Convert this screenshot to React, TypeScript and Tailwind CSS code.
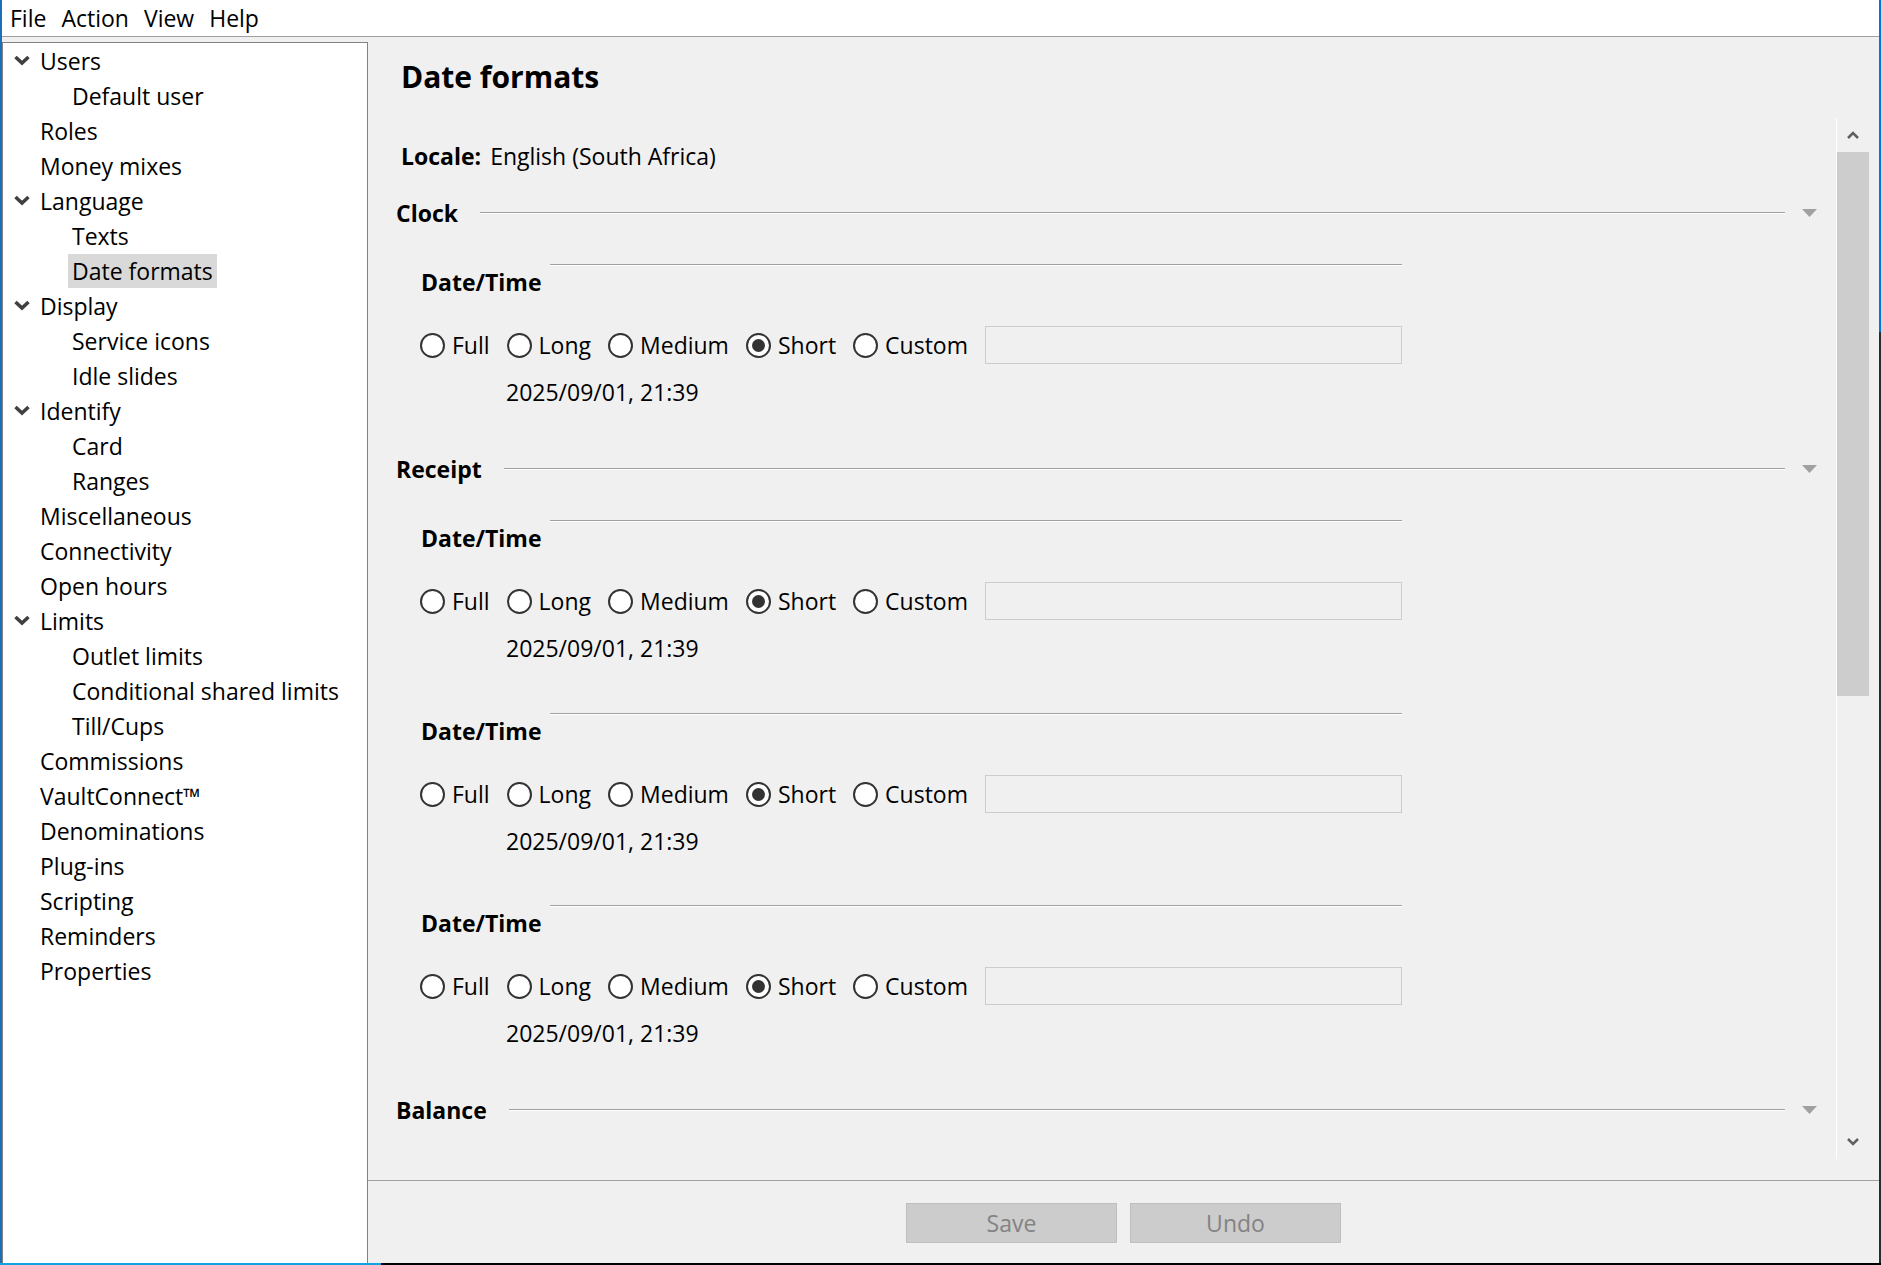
import React from 'react';

type Node = { label: string; child?: boolean; open?: boolean; selected?: boolean };

const tree: Node[] = [
  { label: 'Users', open: true },
  { label: 'Default user', child: true },
  { label: 'Roles' },
  { label: 'Money mixes' },
  { label: 'Language', open: true },
  { label: 'Texts', child: true },
  { label: 'Date formats', child: true, selected: true },
  { label: 'Display', open: true },
  { label: 'Service icons', child: true },
  { label: 'Idle slides', child: true },
  { label: 'Identify', open: true },
  { label: 'Card', child: true },
  { label: 'Ranges', child: true },
  { label: 'Miscellaneous' },
  { label: 'Connectivity' },
  { label: 'Open hours' },
  { label: 'Limits', open: true },
  { label: 'Outlet limits', child: true },
  { label: 'Conditional shared limits', child: true },
  { label: 'Till/Cups', child: true },
  { label: 'Commissions' },
  { label: 'VaultConnect™' },
  { label: 'Denominations' },
  { label: 'Plug-ins' },
  { label: 'Scripting' },
  { label: 'Reminders' },
  { label: 'Properties' },
];

const formats = ['Full', 'Long', 'Medium', 'Short', 'Custom'];

function TreeChevron() {
  return (
    <svg width="18" height="11" viewBox="0 0 18 11" className="block">
      <polyline points="2.5,2 9,8 15.5,2" fill="none" stroke="#404040" strokeWidth="3.5" />
    </svg>
  );
}

function TreeRow({ node }: { node: Node }) {
  if (node.child) {
    return (
      <div className="flex items-center h-[35px]">
        <span className="w-[65px] shrink-0" />
        <span
          className={`flex items-center h-[34px] px-[4px] ${node.selected ? 'bg-[#d9d9d9]' : ''}`}
        >
          {node.label}
        </span>
      </div>
    );
  }
  return (
    <div className="flex items-center h-[35px]">
      <span className="w-[37px] shrink-0 flex items-center pl-[10px]">
        {node.open && <TreeChevron />}
      </span>
      <span>{node.label}</span>
    </div>
  );
}

// etched rule: dark line with a light one under it
function Rule({ className = '' }: { className?: string }) {
  return <div className={`h-0 border-t border-t-[#a0a0a0] border-b border-b-white ${className}`} />;
}

function SectionHeader({ title }: { title: string }) {
  return (
    <div className="flex items-center h-[30px] pl-[28px] pr-[19px]">
      <span className="font-bold">{title}</span>
      <Rule className="flex-1 ml-[22px]" />
      <svg width="15" height="8" viewBox="0 0 15 8" className="ml-[17px] shrink-0">
        <polygon points="0,0 15,0 7.5,8" fill="#a0a0a0" />
      </svg>
    </div>
  );
}

function Radio({ checked }: { checked?: boolean }) {
  return (
    <span className="w-[25px] h-[25px] shrink-0 rounded-full border-2 border-[#333333] bg-white flex items-center justify-center">
      {checked && <span className="w-[13px] h-[13px] rounded-full bg-[#333333]" />}
    </span>
  );
}

function DateTimeGroup({ className = '' }: { className?: string }) {
  return (
    <div className={`ml-[52px] w-[982px] ${className}`}>
      <Rule className="ml-[130px]" />
      <div className="mt-[1px] pl-[1px] font-bold">Date/Time</div>
      <div className="mt-[29px] flex items-center h-[38px] gap-[17px]">
        {formats.map((f) => (
          <label key={f} className="flex items-center gap-[7px]">
            <Radio checked={f === 'Short'} />
            <span>{f}</span>
          </label>
        ))}
        <div className="flex-1 h-[38px] border border-[#cccccc] bg-[#f0f0f0]" />
      </div>
      <div className="mt-[13px] ml-[86px]">2025/09/01, 21:39</div>
    </div>
  );
}

function ScrollArrow({ up }: { up?: boolean }) {
  return (
    <div className="h-[34px] flex items-center justify-center">
      <svg width="12" height="8" viewBox="0 0 12 8">
        <polyline
          points={up ? '1,7 6,2 11,7' : '1,1 6,6 11,1'}
          fill="none"
          stroke="#606060"
          strokeWidth="2.5"
        />
      </svg>
    </div>
  );
}

export default function App() {
  return (
    <div className="w-[1881px] h-[1265px] flex flex-col bg-black text-black text-[23px] leading-[30px] font-['Open_Sans',sans-serif]">
      <div className="flex flex-1 min-h-0">
        <div className="w-[2px] bg-[#1d6fb8]" />

        {/* window */}
        <div className="flex-1 flex flex-col bg-[#f0f0f0] min-w-0">
          <div className="h-[37px] shrink-0 bg-white border-b border-[#a0a0a0] flex items-center pl-[0.5px]">
            {['File', 'Action', 'View', 'Help'].map((m) => (
              <span key={m} className="px-[7.5px]">
                {m}
              </span>
            ))}
          </div>

          <div className="flex flex-1 min-h-0">
            {/* navigation tree */}
            <div className="w-[366px] shrink-0 mt-[5px] bg-white border-l border-t border-r border-[#828282]">
              {tree.map((n) => (
                <TreeRow key={n.label} node={n} />
              ))}
            </div>

            {/* settings page */}
            <div className="flex-1 flex flex-col min-w-0">
              <div className="h-[81px] shrink-0 pt-[20px] pl-[33px]">
                <h1 className="text-[30px] leading-[40px] font-bold">Date formats</h1>
              </div>

              <div className="h-[1041px] shrink-0 flex pr-[10px]">
                <div className="flex-1 overflow-hidden pt-[23px]">
                  <div className="pl-[33px]">
                    <span className="font-bold">Locale:</span>
                    <span className="ml-[9px]">English (South Africa)</span>
                  </div>

                  <div className="mt-[27px]">
                    <SectionHeader title="Clock" />
                  </div>
                  <DateTimeGroup className="mt-[36px]" />

                  <div className="mt-[47px]">
                    <SectionHeader title="Receipt" />
                  </div>
                  <DateTimeGroup className="mt-[36px]" />
                  <DateTimeGroup className="mt-[50px]" />
                  <DateTimeGroup className="mt-[49px]" />

                  <div className="mt-[47px]">
                    <SectionHeader title="Balance" />
                  </div>
                </div>

                {/* vertical scrollbar */}
                <div className="w-[33px] shrink-0 border-l border-white flex flex-col">
                  <ScrollArrow up />
                  <div className="h-[544px] bg-[#cdcdcd]" />
                  <div className="flex-1" />
                  <ScrollArrow />
                </div>
              </div>

              <div className="h-[21px] shrink-0" />
              <div className="border-t border-[#a0a0a0] flex-1 flex justify-center gap-[13px] pt-[22px]">
                {['Save', 'Undo'].map((b) => (
                  <button
                    key={b}
                    className="w-[211px] h-[40px] bg-[#cccccc] border border-[#bfbfbf] text-[#838383] flex items-center justify-center"
                  >
                    {b}
                  </button>
                ))}
              </div>
            </div>
          </div>
        </div>

        <div className="w-[2px] flex flex-col">
          <div className="h-[332px] bg-[#0078d7]" />
          <div className="flex-1 bg-[#2b2b2b]" />
        </div>
      </div>
      <div className="h-[2px] shrink-0 flex">
        <div className="w-[381px] bg-[#12a3e3]" />
        <div className="flex-1 bg-black" />
      </div>
    </div>
  );
}
